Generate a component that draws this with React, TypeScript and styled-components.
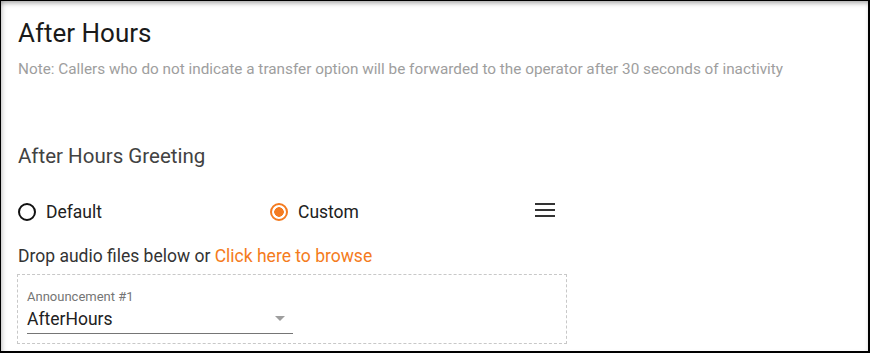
import styled, { createGlobalStyle } from 'styled-components';

const GlobalStyle = createGlobalStyle`
  html, body {
    margin: 0;
    padding: 0;
    background: #fff;
  }
  body {
    font-family: Roboto, 'Liberation Sans', sans-serif;
  }
`;

const orange = '#f47b20';

type RadioProps = { checked?: boolean };

const App = () => {
  return (
    <>
      <GlobalStyle />
      <Frame>
        <Title>After Hours</Title>
        <Note>
          Note: Callers who do not indicate a transfer option will be forwarded to the operator after 30 seconds of
          inactivity
        </Note>

        <SectionTitle>After Hours Greeting</SectionTitle>

        <RadioRow>
          <RadioOption>
            <Radio />
            <RadioLabel>Default</RadioLabel>
          </RadioOption>
          <RadioOption>
            <Radio checked />
            <RadioLabel>Custom</RadioLabel>
          </RadioOption>
          <MenuButton>
            <svg width="20" height="14" viewBox="0 0 20 14">
              <rect x="0" y="0" width="20" height="2" fill="#333" />
              <rect x="0" y="6" width="20" height="2" fill="#333" />
              <rect x="0" y="12" width="20" height="2" fill="#333" />
            </svg>
          </MenuButton>
        </RadioRow>

        <DropText>
          Drop audio files below or <BrowseLink>Click here to browse</BrowseLink>
        </DropText>

        <DropZone>
          <SelectField>
            <FieldLabel>Announcement #1</FieldLabel>
            <SelectValue>
              <span>AfterHours</span>
              <Caret />
            </SelectValue>
          </SelectField>
        </DropZone>
      </Frame>
    </>
  );
};

export default App;

const Frame = styled.div`
  position: relative;
  box-sizing: border-box;
  width: 870px;
  height: 353px;
  overflow: hidden;
  padding: 16px 0 0 17px;
  border-left: 1px solid #000;
  border-right: 2px solid #000;
  border-bottom: 2px solid #000;
  border-top: 1px solid #000;
  box-shadow: inset 0 4px 5px -2px rgba(0, 0, 0, 0.35), inset 5px 0 6px -5px rgba(0, 0, 0, 0.25);
`;

const Title = styled.div`
  font-size: 26px;
  line-height: 32px;
  color: #1a1a1a;
`;

const Note = styled.div`
  margin-top: 10px;
  font-size: 15.3px;
  line-height: 20px;
  color: #9e9e9e;
  white-space: nowrap;
`;

const SectionTitle = styled.div`
  margin-top: 63px;
  font-size: 20.5px;
  line-height: 28px;
  color: #424242;
`;

const RadioRow = styled.div`
  display: flex;
  align-items: center;
  margin-top: 30px;
  height: 24px;
`;

const RadioOption = styled.label`
  display: flex;
  align-items: center;
  width: 252px;
  gap: 10px;
`;

const Radio = styled.span<RadioProps>`
  box-sizing: border-box;
  width: 18px;
  height: 18px;
  border-radius: 50%;
  border: 2px solid ${({ checked }) => (checked ? orange : '#111')};
  background: ${({ checked }) => (checked ? `radial-gradient(circle, ${orange} 0 4.5px, transparent 5px)` : 'transparent')};
`;

const RadioLabel = styled.span`
  font-size: 17.5px;
  color: #212121;
`;

const MenuButton = styled.div`
  display: flex;
  align-items: center;
  margin-left: 13px;
  margin-top: -4px;
`;

const DropText = styled.div`
  margin-top: 20px;
  font-size: 17.5px;
  line-height: 24px;
  color: #333;
`;

const BrowseLink = styled.span`
  color: ${orange};
  cursor: pointer;
`;

const DropZone = styled.div`
  box-sizing: border-box;
  width: 550px;
  height: 70px;
  margin-top: 6px;
  margin-left: -1px;
  padding: 15px 0 0 9px;
  border: 1px dashed #c8c8c8;
`;

const SelectField = styled.div`
  width: 266px;
`;

const FieldLabel = styled.div`
  font-size: 13px;
  line-height: 14px;
  color: #757575;
`;

const SelectValue = styled.div`
  box-sizing: border-box;
  display: flex;
  align-items: center;
  justify-content: space-between;
  height: 30px;
  font-size: 17.5px;
  color: #212121;
  border-bottom: 1px solid #757575;
`;

const Caret = styled.span`
  width: 0;
  height: 0;
  margin-right: 8px;
  border-left: 5.5px solid transparent;
  border-right: 5.5px solid transparent;
  border-top: 5px solid #9e9e9e;
`;
